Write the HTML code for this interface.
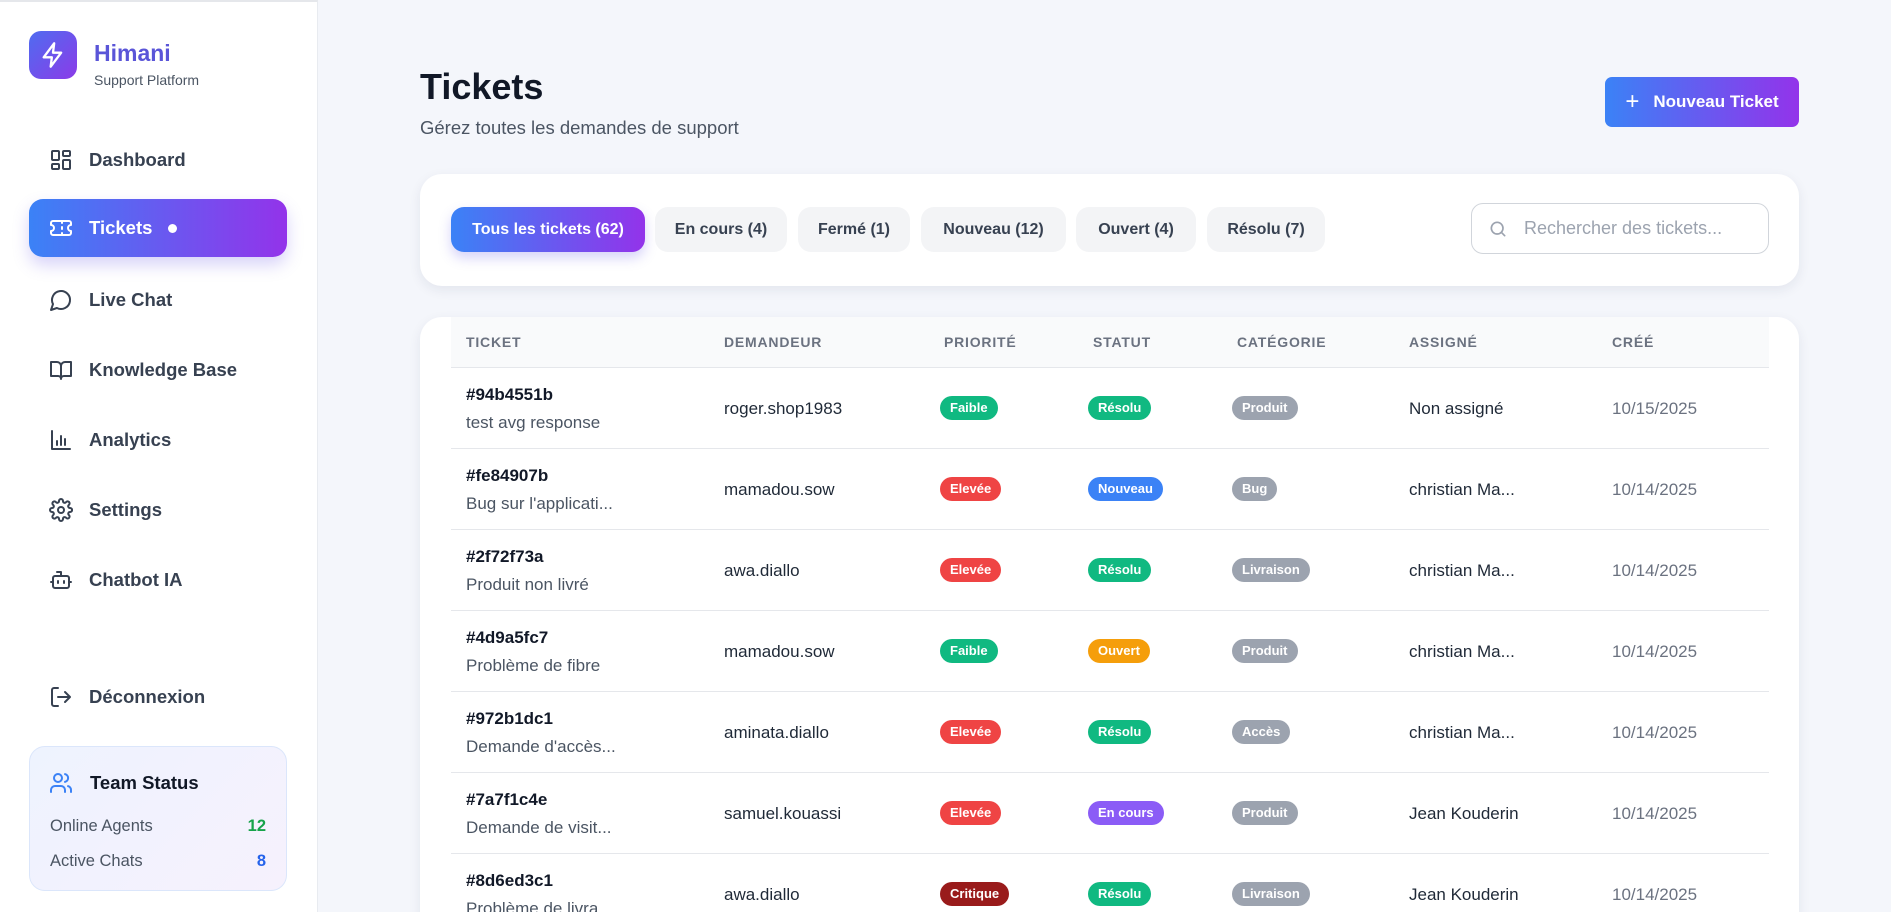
<!DOCTYPE html>
<html style="overflow:hidden;height:912px"><head><meta charset="utf-8"><style>
*{box-sizing:border-box;margin:0;padding:0}
html,body{width:1891px;height:912px;overflow:hidden}
body{background:#f4f6fb;font-family:"Liberation Sans",sans-serif;position:relative;color:#1f2937;white-space:nowrap}
.abs{position:absolute}
#side{left:0;top:0;width:318px;height:912px;background:#fff;border-right:1px solid #e8ebf0;border-top:2px solid #e5e7eb}
.logo{left:29px;top:29px;width:48px;height:48px;border-radius:12px;background:linear-gradient(135deg,#4f6cf0,#8b3be8);display:flex;align-items:center;justify-content:center}
.brand{left:94px;top:38px;font-size:23px;font-weight:700;color:#5a55d8}
.brand2{left:94px;top:70px;font-size:14px;color:#4b5563}
.nav{left:29px;width:258px;height:58px;display:flex;align-items:center;padding-left:20px;font-size:18.5px;font-weight:600;color:#374151}
.nav svg{width:24px;height:24px;margin-right:16px;fill:none;stroke:#374151;stroke-width:2;stroke-linecap:round;stroke-linejoin:round}
.nav.act{background:linear-gradient(90deg,#3b82f6,#9333ea);color:#fff;border-radius:14px;box-shadow:0 8px 16px rgba(100,80,230,.25)}
.nav.act svg{stroke:#fff}
.dot{width:9px;height:9px;border-radius:50%;background:#fff;margin-left:16px}
.team{left:29px;top:744px;width:258px;height:145px;border:1px solid #dbe6fb;border-radius:16px;background:linear-gradient(135deg,#eef3fe,#f6f1fd)}
h1{left:420px;top:66px;font-size:36px;font-weight:700;color:#111827}
.sub{left:420px;top:117px;font-size:18.5px;color:#4b5563}
.btn{left:1605px;top:77px;width:194px;height:50px;border-radius:7px;background:linear-gradient(90deg,#3b82f6,#9333ea);color:#fff;font-size:17px;font-weight:700;display:flex;align-items:center;justify-content:center;gap:14px}
.card{background:#fff;border-radius:22px;box-shadow:0 4px 12px rgba(30,40,80,.08)}
.pill{top:207px;height:45px;border-radius:13px;background:#f3f4f6;font-size:16px;font-weight:600;color:#374151;display:flex;align-items:center;justify-content:center}
.pill.act{background:linear-gradient(90deg,#3b82f6,#9333ea);color:#fff;box-shadow:0 6px 12px rgba(90,80,230,.25)}
.search{left:1471px;top:203px;width:298px;height:51px;border:1px solid #d1d5db;border-radius:12px;display:flex;align-items:center;padding-left:16px;font-size:18px;color:#9ca3af}
.th{top:317px;left:451px;width:1318px;height:51px;background:#f9fafb;border-bottom:1px solid #e5e7eb}
.h{top:334px;font-size:14px;letter-spacing:.8px;color:#6b7280;font-weight:600}
.row{left:451px;width:1318px;height:81px;border-bottom:1px solid #e5e7eb}
.c{position:absolute;font-size:17px;color:#1f2937;white-space:nowrap}
.id{font-weight:700;color:#111827;font-size:17px}
.b{position:absolute;height:24px;line-height:24px;padding:0 10px;border-radius:12px;color:#fff;font-size:13px;font-weight:700;white-space:nowrap}
</style></head><body>
<div id="side" class="abs">
<div class="abs logo"><svg width="28" height="28" viewBox="0 0 24 24" fill="none" stroke="#fff" stroke-width="2" stroke-linejoin="round"><path d="M13 2L4 14h7l-1 8 9-12h-7z"/></svg></div>
<div class="abs brand">Himani</div>
<div class="abs brand2">Support Platform</div>
<div class="abs nav" style="top:129px"><svg viewBox="0 0 24 24"><rect x="3" y="3" width="7" height="9" rx="1"/><rect x="14" y="3" width="7" height="5" rx="1"/><rect x="14" y="12" width="7" height="9" rx="1"/><rect x="3" y="16" width="7" height="5" rx="1"/></svg>Dashboard</div>
<div class="abs nav act" style="top:197px"><svg viewBox="0 0 24 24"><path d="M2 9a3 3 0 0 1 0 6v2a2 2 0 0 0 2 2h16a2 2 0 0 0 2-2v-2a3 3 0 0 1 0-6V7a2 2 0 0 0-2-2H4a2 2 0 0 0-2 2z"/><path d="M13 5v2M13 17v2M13 11v2"/></svg>Tickets<span class="dot"></span></div>
<div class="abs nav" style="top:269px"><svg viewBox="0 0 24 24"><path d="M7.9 20A9 9 0 1 0 4 16.1L2 22z"/></svg>Live Chat</div>
<div class="abs nav" style="top:339px"><svg viewBox="0 0 24 24"><path d="M2 4h6a4 4 0 0 1 4 4v13a3 3 0 0 0-3-3H2zM22 4h-6a4 4 0 0 0-4 4v13a3 3 0 0 1 3-3h7z"/></svg>Knowledge Base</div>
<div class="abs nav" style="top:409px"><svg viewBox="0 0 24 24"><path d="M3 3v18h18M8 17v-4M12 17V8M16 17v-6"/></svg>Analytics</div>
<div class="abs nav" style="top:479px"><svg viewBox="0 0 24 24"><circle cx="12" cy="12" r="3"/><path d="M19.4 15a1.7 1.7 0 0 0 .3 1.8l.1.1a2 2 0 1 1-2.8 2.8l-.1-.1a1.7 1.7 0 0 0-2.9 1.2V21a2 2 0 1 1-4 0v-.1a1.7 1.7 0 0 0-2.9-1.2l-.1.1a2 2 0 1 1-2.8-2.8l.1-.1A1.7 1.7 0 0 0 3 14H3a2 2 0 1 1 0-4h.1a1.7 1.7 0 0 0 1.2-2.9l-.1-.1a2 2 0 1 1 2.8-2.8l.1.1A1.7 1.7 0 0 0 10 3V3a2 2 0 1 1 4 0v.1a1.7 1.7 0 0 0 2.9 1.2l.1-.1a2 2 0 1 1 2.8 2.8l-.1.1A1.7 1.7 0 0 0 21 10h.1a2 2 0 1 1 0 4H21a1.7 1.7 0 0 0-1.6 1z"/></svg>Settings</div>
<div class="abs nav" style="top:549px"><svg viewBox="0 0 24 24"><rect x="4" y="8" width="16" height="12" rx="2"/><path d="M12 8V4H8M2 14h2M20 14h2M15 13v2M9 13v2"/></svg>Chatbot IA</div>
<div class="abs nav" style="top:666px"><svg viewBox="0 0 24 24"><path d="M9 21H5a2 2 0 0 1-2-2V5a2 2 0 0 1 2-2h4M16 17l5-5-5-5M21 12H9"/></svg>Déconnexion</div>
<div class="abs team">
<svg class="abs" style="left:19px;top:24px" width="24" height="24" viewBox="0 0 24 24" fill="none" stroke="#3b82f6" stroke-width="2" stroke-linecap="round"><path d="M16 21v-2a4 4 0 0 0-4-4H6a4 4 0 0 0-4 4v2"/><circle cx="9" cy="7" r="4"/><path d="M22 21v-2a4 4 0 0 0-3-3.9M16 3.1a4 4 0 0 1 0 7.8"/></svg>
<div class="abs" style="left:60px;top:25px;font-size:18.5px;font-weight:700;color:#111827">Team Status</div>
<div class="abs" style="left:20px;top:70px;font-size:16.5px;color:#4b5563">Online Agents</div>
<div class="abs" style="right:20px;top:70px;font-size:16.5px;font-weight:700;color:#16a34a">12</div>
<div class="abs" style="left:20px;top:105px;font-size:16.5px;color:#4b5563">Active Chats</div>
<div class="abs" style="right:20px;top:105px;font-size:16.5px;font-weight:700;color:#2563eb">8</div>
</div>
</div>
<h1 class="abs">Tickets</h1>
<div class="abs sub">Gérez toutes les demandes de support</div>
<div class="abs btn"><span style="font-size:24px;font-weight:300">+</span>Nouveau Ticket</div>
<div class="abs card" style="left:420px;top:174px;width:1379px;height:112px"></div>
<div class="abs pill act" style="left:451px;width:194px">Tous les tickets (62)</div>
<div class="abs pill" style="left:655px;width:132px">En cours (4)</div>
<div class="abs pill" style="left:798px;width:112px">Fermé (1)</div>
<div class="abs pill" style="left:921px;width:145px">Nouveau (12)</div>
<div class="abs pill" style="left:1076px;width:120px">Ouvert (4)</div>
<div class="abs pill" style="left:1207px;width:118px">Résolu (7)</div>
<div class="abs search"><svg width="20" height="20" viewBox="0 0 24 24" fill="none" stroke="#9ca3af" stroke-width="2" stroke-linecap="round"><circle cx="11" cy="11" r="7"/><path d="M20 20l-4-4"/></svg><span style="margin-left:16px">Rechercher des tickets...</span></div>
<div class="abs card" style="left:420px;top:317px;width:1379px;height:620px;border-bottom-left-radius:0;border-bottom-right-radius:0"></div>
<div class="abs th"></div>
<div class="abs h" style="left:466px">TICKET</div>
<div class="abs h" style="left:724px">DEMANDEUR</div>
<div class="abs h" style="left:944px">PRIORITÉ</div>
<div class="abs h" style="left:1093px">STATUT</div>
<div class="abs h" style="left:1237px">CATÉGORIE</div>
<div class="abs h" style="left:1409px">ASSIGNÉ</div>
<div class="abs h" style="left:1612px">CRÉÉ</div>

<div class="abs row" style="top:368px"></div>
<div class="abs row" style="top:449px"></div>
<div class="abs row" style="top:530px"></div>
<div class="abs row" style="top:611px"></div>
<div class="abs row" style="top:692px"></div>
<div class="abs row" style="top:773px"></div>

<div style="position:absolute;left:0;top:368px;width:1891px">
<div class="c id" style="left:466px;top:17px">#94b4551b</div><div class="c" style="left:466px;top:45px;color:#4b5563">test avg response</div>
<div class="c" style="left:724px;top:31px">roger.shop1983</div>
<div class="b" style="left:940px;top:28px;background:#10b981">Faible</div>
<div class="b" style="left:1088px;top:28px;background:#10b981">Résolu</div>
<div class="b" style="left:1232px;top:28px;background:#9ca3af">Produit</div>
<div class="c" style="left:1409px;top:31px">Non assigné</div>
<div class="c" style="left:1612px;top:31px;color:#6b7280">10/15/2025</div>
</div>
<div style="position:absolute;left:0;top:449px;width:1891px">
<div class="c id" style="left:466px;top:17px">#fe84907b</div><div class="c" style="left:466px;top:45px;color:#4b5563">Bug sur l'applicati...</div>
<div class="c" style="left:724px;top:31px">mamadou.sow</div>
<div class="b" style="left:940px;top:28px;background:#ef4444">Elevée</div>
<div class="b" style="left:1088px;top:28px;background:#3b82f6">Nouveau</div>
<div class="b" style="left:1232px;top:28px;background:#9ca3af">Bug</div>
<div class="c" style="left:1409px;top:31px">christian Ma...</div>
<div class="c" style="left:1612px;top:31px;color:#6b7280">10/14/2025</div>
</div>
<div style="position:absolute;left:0;top:530px;width:1891px">
<div class="c id" style="left:466px;top:17px">#2f72f73a</div><div class="c" style="left:466px;top:45px;color:#4b5563">Produit non livré</div>
<div class="c" style="left:724px;top:31px">awa.diallo</div>
<div class="b" style="left:940px;top:28px;background:#ef4444">Elevée</div>
<div class="b" style="left:1088px;top:28px;background:#10b981">Résolu</div>
<div class="b" style="left:1232px;top:28px;background:#9ca3af">Livraison</div>
<div class="c" style="left:1409px;top:31px">christian Ma...</div>
<div class="c" style="left:1612px;top:31px;color:#6b7280">10/14/2025</div>
</div>
<div style="position:absolute;left:0;top:611px;width:1891px">
<div class="c id" style="left:466px;top:17px">#4d9a5fc7</div><div class="c" style="left:466px;top:45px;color:#4b5563">Problème de fibre</div>
<div class="c" style="left:724px;top:31px">mamadou.sow</div>
<div class="b" style="left:940px;top:28px;background:#10b981">Faible</div>
<div class="b" style="left:1088px;top:28px;background:#f59e0b">Ouvert</div>
<div class="b" style="left:1232px;top:28px;background:#9ca3af">Produit</div>
<div class="c" style="left:1409px;top:31px">christian Ma...</div>
<div class="c" style="left:1612px;top:31px;color:#6b7280">10/14/2025</div>
</div>
<div style="position:absolute;left:0;top:692px;width:1891px">
<div class="c id" style="left:466px;top:17px">#972b1dc1</div><div class="c" style="left:466px;top:45px;color:#4b5563">Demande d'accès...</div>
<div class="c" style="left:724px;top:31px">aminata.diallo</div>
<div class="b" style="left:940px;top:28px;background:#ef4444">Elevée</div>
<div class="b" style="left:1088px;top:28px;background:#10b981">Résolu</div>
<div class="b" style="left:1232px;top:28px;background:#9ca3af">Accès</div>
<div class="c" style="left:1409px;top:31px">christian Ma...</div>
<div class="c" style="left:1612px;top:31px;color:#6b7280">10/14/2025</div>
</div>
<div style="position:absolute;left:0;top:773px;width:1891px">
<div class="c id" style="left:466px;top:17px">#7a7f1c4e</div><div class="c" style="left:466px;top:45px;color:#4b5563">Demande de visit...</div>
<div class="c" style="left:724px;top:31px">samuel.kouassi</div>
<div class="b" style="left:940px;top:28px;background:#ef4444">Elevée</div>
<div class="b" style="left:1088px;top:28px;background:#8b5cf6">En cours</div>
<div class="b" style="left:1232px;top:28px;background:#9ca3af">Produit</div>
<div class="c" style="left:1409px;top:31px">Jean Kouderin</div>
<div class="c" style="left:1612px;top:31px;color:#6b7280">10/14/2025</div>
</div>
<div style="position:absolute;left:0;top:854px;width:1891px">
<div class="c id" style="left:466px;top:17px">#8d6ed3c1</div><div class="c" style="left:466px;top:45px;color:#4b5563">Problème de livra...</div>
<div class="c" style="left:724px;top:31px">awa.diallo</div>
<div class="b" style="left:940px;top:28px;background:#991b1b">Critique</div>
<div class="b" style="left:1088px;top:28px;background:#10b981">Résolu</div>
<div class="b" style="left:1232px;top:28px;background:#9ca3af">Livraison</div>
<div class="c" style="left:1409px;top:31px">Jean Kouderin</div>
<div class="c" style="left:1612px;top:31px;color:#6b7280">10/14/2025</div>
</div>
</body></html>
